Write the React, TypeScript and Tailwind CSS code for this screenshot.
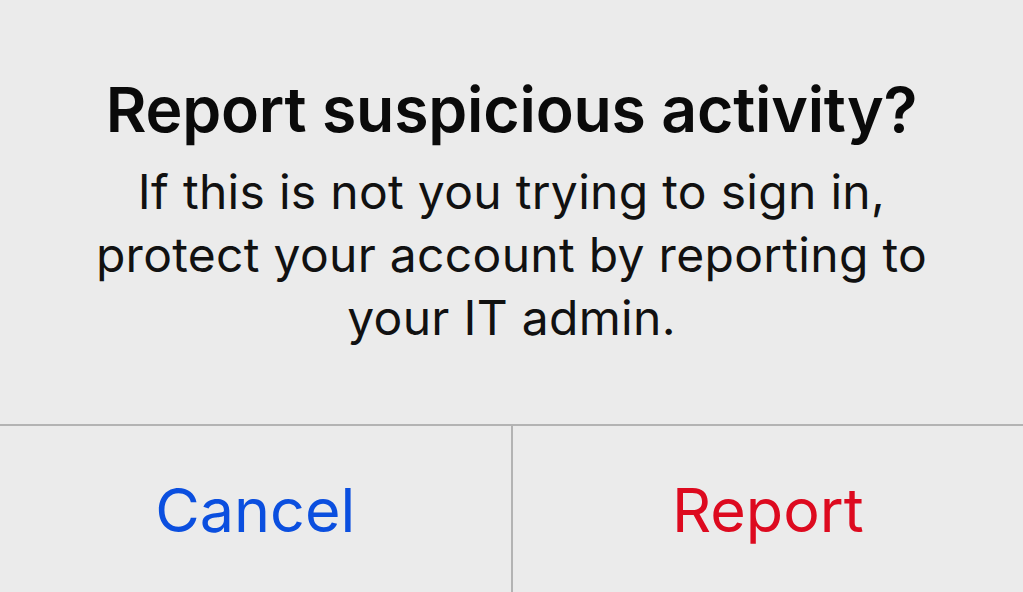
export default function App() {
  return (
    <div
      className="w-[1023px] h-[592px] bg-[#ebebeb] flex flex-col overflow-hidden"
      style={{ fontFamily: "Inter, 'Noto Sans', sans-serif" }}
    >
      <div className="h-[424px] flex flex-col items-center pt-[71px]">
        <h1 className="text-[62.5px] leading-[76px] font-semibold text-[#0a0a0a] tracking-[-0.2px]">
          Report suspicious activity?
        </h1>
        <p className="mt-[13px] text-[48px] leading-[63px] text-[#111] text-center tracking-[0.3px]">
          If this is not you trying to sign in,
          <br />
          protect your account by reporting to
          <br />
          your IT admin.
        </p>
      </div>
      <div className="flex-1 flex border-t-2 border-[#b3b3b3]">
        <button className="flex-1 flex items-center justify-center pt-[3px] text-[61px] text-[#0b4fdf] border-r-2 border-[#b3b3b3]">
          Cancel
        </button>
        <button className="flex-1 flex items-center justify-center pt-[3px] text-[61px] text-[#dd0a1f]">
          Report
        </button>
      </div>
    </div>
  );
}
